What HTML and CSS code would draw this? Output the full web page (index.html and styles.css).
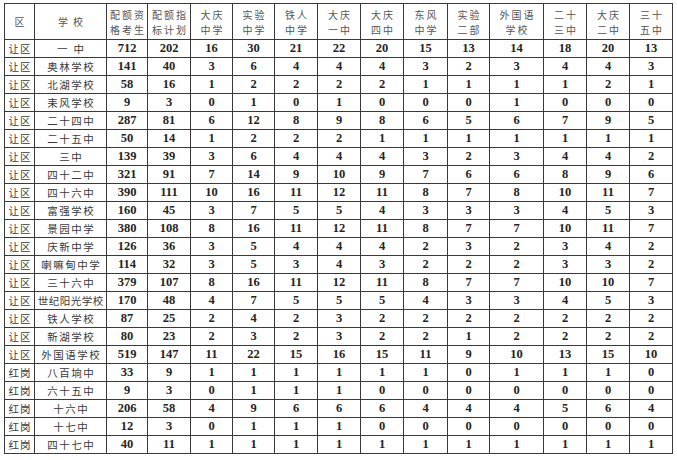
FILE: index.html
```html
<!DOCTYPE html>
<html lang="zh">
<head>
<meta charset="utf-8">
<title>配额指标计划</title>
<link rel="stylesheet" href="styles.css">
</head>
<body>
<div class="page">
<table class="quota">
<colgroup>
<col class="w30"><col class="w72"><col class="w41"><col class="w43"><col class="w42"><col class="w42"><col class="w43"><col class="w43"><col class="w43"><col class="w44"><col class="w42"><col class="w54"><col class="w43"><col class="w43"><col class="w43">
</colgroup>
<thead>
<tr>
<th>区</th><th class="wide">学校</th><th>配额资<br>格考生</th><th>配额指<br>标计划</th><th>大庆<br>中学</th><th>实验<br>中学</th><th>铁人<br>中学</th><th>大庆<br>一中</th><th>大庆<br>四中</th><th>东风<br>中学</th><th>实验<br>二部</th><th>外国语<br>学校</th><th>二十<br>三中</th><th>大庆<br>二中</th><th>三十<br>五中</th>
</tr>
</thead>
<tbody>
<tr><td class="r">让区</td><td class="s xwide">一中</td><td>712</td><td>202</td><td>16</td><td>30</td><td>21</td><td>22</td><td>20</td><td>15</td><td>13</td><td>14</td><td>18</td><td>20</td><td>13</td></tr>
<tr><td class="r">让区</td><td class="s">奥林学校</td><td>141</td><td>40</td><td>3</td><td>6</td><td>4</td><td>4</td><td>4</td><td>3</td><td>2</td><td>3</td><td>4</td><td>4</td><td>3</td></tr>
<tr><td class="r">让区</td><td class="s">北湖学校</td><td>58</td><td>16</td><td>1</td><td>2</td><td>2</td><td>2</td><td>2</td><td>1</td><td>1</td><td>1</td><td>1</td><td>2</td><td>1</td></tr>
<tr><td class="r">让区</td><td class="s">耒风学校</td><td>9</td><td>3</td><td>0</td><td>1</td><td>0</td><td>1</td><td>0</td><td>0</td><td>0</td><td>1</td><td>0</td><td>0</td><td>0</td></tr>
<tr><td class="r">让区</td><td class="s">二十四中</td><td>287</td><td>81</td><td>6</td><td>12</td><td>8</td><td>9</td><td>8</td><td>6</td><td>5</td><td>6</td><td>7</td><td>9</td><td>5</td></tr>
<tr><td class="r">让区</td><td class="s">二十五中</td><td>50</td><td>14</td><td>1</td><td>2</td><td>2</td><td>2</td><td>1</td><td>1</td><td>1</td><td>1</td><td>1</td><td>1</td><td>1</td></tr>
<tr><td class="r">让区</td><td class="s">三中</td><td>139</td><td>39</td><td>3</td><td>6</td><td>4</td><td>4</td><td>4</td><td>3</td><td>2</td><td>3</td><td>4</td><td>4</td><td>2</td></tr>
<tr><td class="r">让区</td><td class="s">四十二中</td><td>321</td><td>91</td><td>7</td><td>14</td><td>9</td><td>10</td><td>9</td><td>7</td><td>6</td><td>6</td><td>8</td><td>9</td><td>6</td></tr>
<tr><td class="r">让区</td><td class="s">四十六中</td><td>390</td><td>111</td><td>10</td><td>16</td><td>11</td><td>12</td><td>11</td><td>8</td><td>7</td><td>8</td><td>10</td><td>11</td><td>7</td></tr>
<tr><td class="r">让区</td><td class="s">富强学校</td><td>160</td><td>45</td><td>3</td><td>7</td><td>5</td><td>5</td><td>4</td><td>3</td><td>3</td><td>3</td><td>4</td><td>5</td><td>3</td></tr>
<tr><td class="r">让区</td><td class="s">景园中学</td><td>380</td><td>108</td><td>8</td><td>16</td><td>11</td><td>12</td><td>11</td><td>8</td><td>7</td><td>7</td><td>10</td><td>11</td><td>7</td></tr>
<tr><td class="r">让区</td><td class="s">庆新中学</td><td>126</td><td>36</td><td>3</td><td>5</td><td>4</td><td>4</td><td>4</td><td>2</td><td>3</td><td>2</td><td>3</td><td>4</td><td>2</td></tr>
<tr><td class="r">让区</td><td class="s">喇嘛甸中学</td><td>114</td><td>32</td><td>3</td><td>5</td><td>3</td><td>4</td><td>3</td><td>2</td><td>2</td><td>2</td><td>3</td><td>3</td><td>2</td></tr>
<tr><td class="r">让区</td><td class="s">三十六中</td><td>379</td><td>107</td><td>8</td><td>16</td><td>11</td><td>12</td><td>11</td><td>8</td><td>7</td><td>7</td><td>10</td><td>10</td><td>7</td></tr>
<tr><td class="r">让区</td><td class="s tight">世纪阳光学校</td><td>170</td><td>48</td><td>4</td><td>7</td><td>5</td><td>5</td><td>5</td><td>4</td><td>3</td><td>3</td><td>4</td><td>5</td><td>3</td></tr>
<tr><td class="r">让区</td><td class="s">铁人学校</td><td>87</td><td>25</td><td>2</td><td>4</td><td>2</td><td>3</td><td>2</td><td>2</td><td>2</td><td>2</td><td>2</td><td>2</td><td>2</td></tr>
<tr><td class="r">让区</td><td class="s">新湖学校</td><td>80</td><td>23</td><td>2</td><td>3</td><td>2</td><td>3</td><td>2</td><td>2</td><td>1</td><td>2</td><td>2</td><td>2</td><td>2</td></tr>
<tr><td class="r">让区</td><td class="s">外国语学校</td><td>519</td><td>147</td><td>11</td><td>22</td><td>15</td><td>16</td><td>15</td><td>11</td><td>9</td><td>10</td><td>13</td><td>15</td><td>10</td></tr>
<tr><td class="r">红岗</td><td class="s">八百垧中</td><td>33</td><td>9</td><td>1</td><td>1</td><td>1</td><td>1</td><td>1</td><td>1</td><td>0</td><td>1</td><td>1</td><td>1</td><td>0</td></tr>
<tr><td class="r">红岗</td><td class="s">六十五中</td><td>9</td><td>3</td><td>0</td><td>1</td><td>1</td><td>1</td><td>0</td><td>0</td><td>0</td><td>0</td><td>0</td><td>0</td><td>0</td></tr>
<tr><td class="r">红岗</td><td class="s">十六中</td><td>206</td><td>58</td><td>4</td><td>9</td><td>6</td><td>6</td><td>6</td><td>4</td><td>4</td><td>4</td><td>5</td><td>6</td><td>4</td></tr>
<tr><td class="r">红岗</td><td class="s">十七中</td><td>12</td><td>3</td><td>0</td><td>1</td><td>1</td><td>1</td><td>0</td><td>0</td><td>0</td><td>0</td><td>0</td><td>0</td><td>0</td></tr>
<tr><td class="r">红岗</td><td class="s">四十七中</td><td>40</td><td>11</td><td>1</td><td>1</td><td>1</td><td>1</td><td>1</td><td>1</td><td>1</td><td>1</td><td>1</td><td>1</td><td>1</td></tr>
</tbody>
</table>
</div>
</body>
</html>
```
FILE: styles.css
```css
html, body {
  margin: 0;
  padding: 0;
  background: #ffffff;
}
.page {
  padding: 3px 0 0 4px;
}
.quota {
  border-collapse: collapse;
  table-layout: fixed;
  width: 668px;
  font-family: "Noto Sans CJK SC", "Noto Sans", sans-serif;
  color: #2b2b2b;
}
.w30 { width: 30px; }
.w41 { width: 41px; }
.w42 { width: 42px; }
.w43 { width: 43px; }
.w44 { width: 44px; }
.w54 { width: 54px; }
.w72 { width: 72px; }
.quota th,
.quota td {
  border: 1px solid #3a3a3a;
  padding: 0;
  text-align: center;
  vertical-align: middle;
  overflow: hidden;
  white-space: nowrap;
}
.quota th {
  height: 35px;
  font-size: 10px;
  font-weight: 400;
  line-height: 15px;
  letter-spacing: 2px;
  color: #555555;
  padding-left: 2px;
}
.quota th.wide {
  letter-spacing: 5px;
  padding-left: 5px;
}
.quota td {
  height: 17px;
  font-family: "Liberation Serif", "DejaVu Serif", serif;
  font-weight: 700;
  font-size: 12.5px;
  line-height: 17px;
  color: #242424;
}
.quota td.r,
.quota td.s {
  font-family: "Noto Sans CJK SC", "Noto Sans", sans-serif;
  font-weight: 400;
  font-size: 10.5px;
  color: #3a3a3a;
}
.quota td.r {
  letter-spacing: 1px;
  padding-left: 1px;
}
.quota td.s {
  letter-spacing: 1.5px;
  padding-left: 1.5px;
}
.quota td.s.xwide {
  letter-spacing: 6px;
  padding-left: 6px;
}
.quota td.s.tight {
  letter-spacing: 0.5px;
  padding-left: 0.5px;
}
```
